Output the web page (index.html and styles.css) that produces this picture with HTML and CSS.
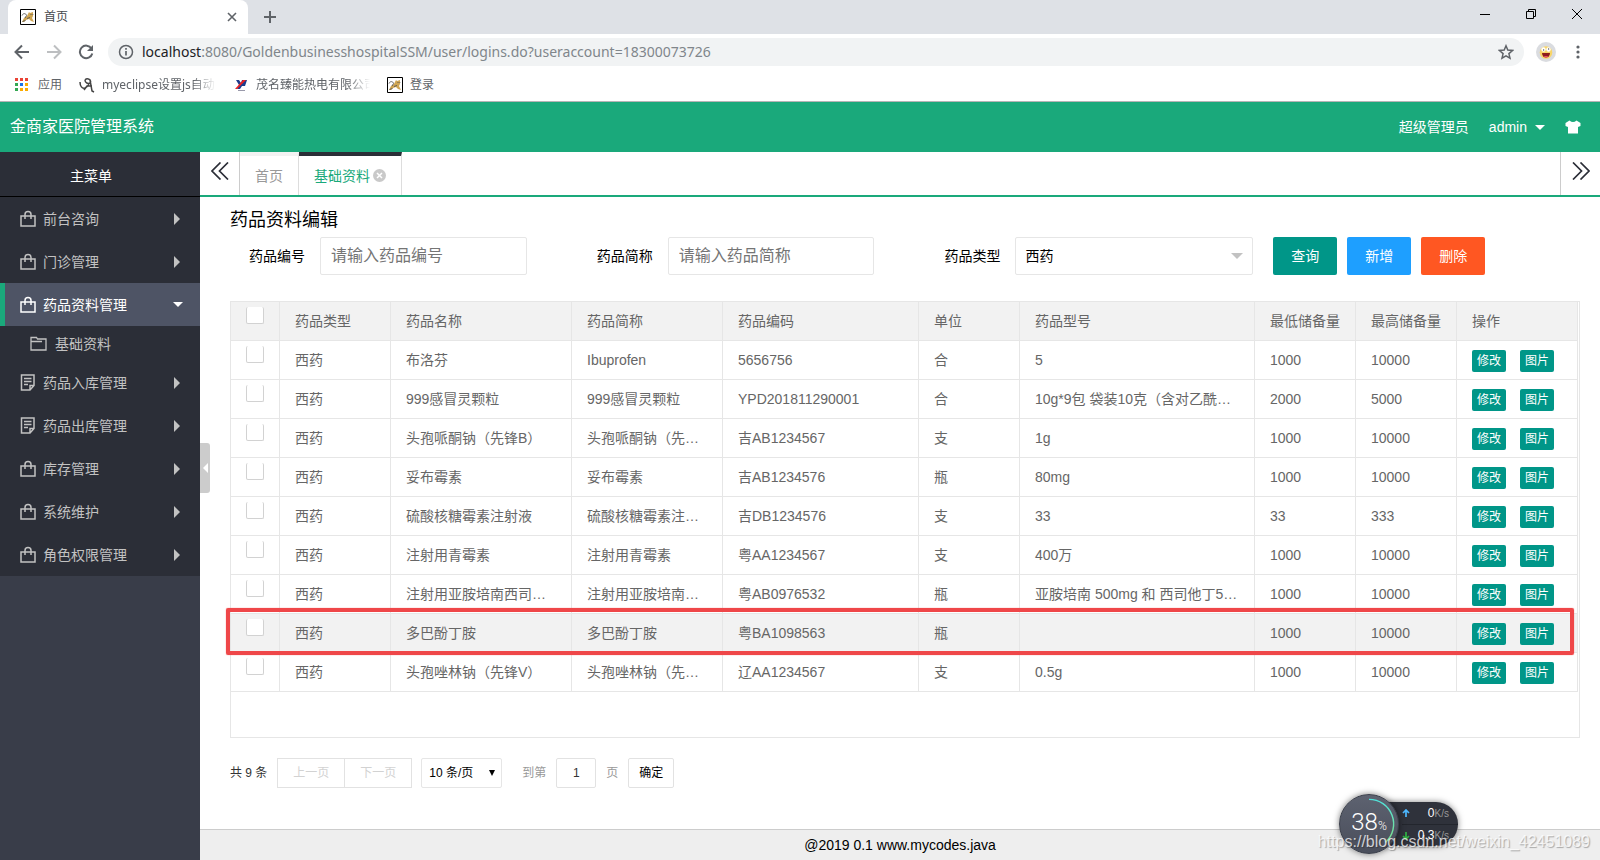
FILE: index.html
```html
<!DOCTYPE html>
<html lang="zh-CN">
<head>
<meta charset="utf-8">
<title>首页</title>
<link rel="stylesheet" href="styles.css">
</head>
<body>
<svg class="defs" width="0" height="0" aria-hidden="true">
  <symbol id="bag" viewBox="0 0 16 17"><path d="M1 6h14v10H1zM5 9V4.500a3 3 0 0 1 6 0V9" fill="none" stroke="currentColor" stroke-width="1.500"/></symbol>
  <symbol id="note" viewBox="0 0 16 17"><path d="M1.500 1h12.500v10.500L10 16H1.500zM14 11.500h-4V16M4 4.500h7.500M4 7.500h7.500M4 10.500h4" fill="none" stroke="currentColor" stroke-width="1.500"/></symbol>
  <symbol id="folder" viewBox="0 0 17 16"><path d="M1 14V1.500h5.500l1 1.500H16v11zM1 5.500h11" fill="none" stroke="currentColor" stroke-width="1.300"/></symbol>
  <symbol id="cat" viewBox="0 0 16 16"><path d="M.5.5h15v15H.5z" fill="#fff" stroke="#000"/><path d="M2 13l2-4 3-2 2-4 1 1 3-1v4l-1 2 2 4-3-1-2-2-3 1-2 2z" fill="#cfa552"/><path d="M2 6.500C3 4 6 4 6.500 6.500L5 9M7 9.500l3-1M10.500 5.500h1M12.500 5.500h.8M2.500 12.500l3-1" fill="none" stroke="#555" stroke-width=".9"/></symbol>
</svg>

<div class="browser">
  <div class="tabstrip">
    <div class="browser-tab">
      <svg class="i16"><use href="#cat"/></svg><span>首页</span>
      <button class="plain tab-x" aria-label="关闭标签页"><svg width="10" height="10" viewBox="0 0 10 10"><path d="M1 1l8 8M9 1L1 9" stroke="#5f6368" stroke-width="1.600"/></svg></button>
    </div>
    <button class="plain new-tab" aria-label="新标签页"><svg width="12" height="12" viewBox="0 0 12 12"><path d="M6 0v12M0 6h12" stroke="#5f6368" stroke-width="2"/></svg></button>
    <div class="win-buttons">
      <button class="plain" aria-label="最小化"><svg width="10" height="10"><path d="M0 5.500h10" stroke="#000"/></svg></button>
      <button class="plain" aria-label="还原"><svg width="10" height="10"><path d="M.5 2.500h7v7h-7zM2.500 2.500v-2h7v7h-2" fill="none" stroke="#000"/></svg></button>
      <button class="plain" aria-label="关闭"><svg width="10" height="10"><path d="M0 0l10 10M10 0L0 10" stroke="#000"/></svg></button>
    </div>
  </div>
  <div class="toolbar">
    <button class="plain" aria-label="后退"><svg width="16" height="16" viewBox="0 0 16 16"><path d="M15 8H2M8 1.500L1.500 8 8 14.500" fill="none" stroke="#5f6368" stroke-width="2"/></svg></button>
    <button class="plain" aria-label="前进"><svg width="16" height="16" viewBox="0 0 16 16"><path d="M1 8h13M8 1.500L14.500 8 8 14.500" fill="none" stroke="#bdbfc1" stroke-width="2"/></svg></button>
    <button class="plain" aria-label="刷新"><svg width="16" height="16" viewBox="0 0 16 16"><path d="M13.500 4.500A6.300 6.300 0 1 0 14.300 9.500" fill="none" stroke="#5f6368" stroke-width="2"/><path d="M15 1v6H9z" fill="#5f6368"/></svg></button>
    <div class="omnibox">
      <svg width="16" height="16" viewBox="0 0 16 16"><circle cx="8" cy="8" r="6.500" fill="none" stroke="#5f6368" stroke-width="1.500"/><path d="M8 7v4.500M8 4v1.700" stroke="#5f6368" stroke-width="1.700"/></svg>
      <span class="url"><b>localhost</b>:8080/GoldenbusinesshospitalSSM/user/logins.do?useraccount=18300073726</span>
      <svg width="16" height="16" viewBox="0 0 16 16"><path d="M8 1.800l1.800 4.300 4.700.4-3.600 3.100 1.100 4.600L8 11.800l-4 2.400 1.100-4.600L1.500 6.500l4.700-.4z" fill="none" stroke="#5f6368" stroke-width="1.500"/></svg>
    </div>
    <svg class="avatar" width="20" height="20" viewBox="0 0 20 20"><circle cx="10" cy="10" r="10" fill="#dadce0"/><circle cx="10" cy="10.500" r="6.300" fill="#f8d568"/><circle cx="7.500" cy="7.500" r="2.200" fill="#fff"/><circle cx="12.500" cy="7.500" r="2.200" fill="#fff"/><path d="M7 8h1.200M12 7h1.200" stroke="#333"/><path d="M6 11h8a4 4.500 0 0 1-8 0z" fill="#8d1d1d"/><path d="M7.800 14h4.400l-1 1.300H8.800z" fill="#f04a6a"/></svg>
    <button class="plain" aria-label="菜单"><svg width="4" height="14" viewBox="0 0 4 14"><g fill="#5f6368"><circle cx="2" cy="2" r="1.600"/><circle cx="2" cy="7" r="1.600"/><circle cx="2" cy="12" r="1.600"/></g></svg></button>
  </div>
  <nav class="bookmarks">
    <a href="#" class="apps"><svg width="14" height="14" viewBox="0 0 14 14"><path d="M0 0h3v3H0zM5 0h3v3H5zM10 0h3v3h-3z" fill="#ea4335"/><path d="M0 5h3v3H0zM0 10h3v3H0z" fill="#34a853"/><path d="M5 5h3v3H5z" fill="#1a73e8"/><path d="M10 5h3v3h-3zM5 10h3v3H5zM10 10h3v3h-3z" fill="#fbab00"/></svg><span>应用</span></a>
    <a href="#"><svg class="i16" viewBox="0 0 16 16"><path d="M1 5c0 4 2 7 5 6 2-1 3-2 4-4M6 3a3 2.500 0 1 1 5 3c-2 1-5 0-5-3M11 3l2 11 2 1M5 13l3-4h5" fill="none" stroke="#444" stroke-width="1.500"/></svg><span class="fade">myeclipse设置js自动</span></a>
    <a href="#"><svg class="i16" viewBox="0 0 16 16"><path d="M3 3h3l2 3 1-3h5l-2 6H9l-2 3H4l2-4z" fill="#1d3c8c"/><path d="M13 3L4 12H2l8-9z" fill="#e22"/><path d="M5 13.500h7" stroke="#99a"/></svg><span class="fade">茂名臻能热电有限公司</span></a>
    <a href="#"><svg class="i16"><use href="#cat"/></svg><span>登录</span></a>
  </nav>
</div>

<header class="topbar">
  <h1>金商家医院管理系统</h1>
  <div class="account">
    <span>超级管理员</span>
    <a href="#">admin<i class="tri down"></i></a>
    <button class="plain" aria-label="换肤"><svg width="16" height="14" viewBox="0 0 16 14"><path d="M4.500.5Q8 3.500 11.500.5L15.500 3v3L13 7v6.500H3V7L.5 6V3z" fill="#fff"/></svg></button>
  </div>
</header>

<div class="app">
  <aside class="sidebar">
    <h2>主菜单</h2>
    <nav>
      <a href="#"><svg><use href="#bag"/></svg>前台咨询<i class="tri"></i></a>
      <a href="#"><svg><use href="#bag"/></svg>门诊管理<i class="tri"></i></a>
      <a href="#" class="open"><svg><use href="#bag"/></svg>药品资料管理<i class="tri down"></i></a>
      <a href="#" class="sub"><svg><use href="#folder"/></svg>基础资料</a>
      <a href="#"><svg><use href="#note"/></svg>药品入库管理<i class="tri"></i></a>
      <a href="#"><svg><use href="#note"/></svg>药品出库管理<i class="tri"></i></a>
      <a href="#"><svg><use href="#bag"/></svg>库存管理<i class="tri"></i></a>
      <a href="#"><svg><use href="#bag"/></svg>系统维护<i class="tri"></i></a>
      <a href="#"><svg><use href="#bag"/></svg>角色权限管理<i class="tri"></i></a>
    </nav>
    <button class="plain fold" aria-label="收起菜单"><i class="tri left"></i></button>
  </aside>

  <div class="main">
    <div class="page-tabs">
      <button class="plain scroll" aria-label="向左"><svg width="18" height="18" viewBox="0 0 18 18"><path d="M9.500.5L1 9l8.500 8.500M17 .5L8.500 9l8.500 8.500" fill="none" stroke="#2b2e37" stroke-width="1.700"/></svg></button>
      <a href="#" class="tab home">首页</a>
      <a href="#" class="tab current">基础资料<svg width="13" height="13" viewBox="0 0 13 13"><circle cx="6.500" cy="6.500" r="6.500" fill="#c9c9c9"/><path d="M4 4l5 5M9 4L4 9" stroke="#fff" stroke-width="1.500"/></svg></a>
      <button class="plain scroll right" aria-label="向右"><svg width="18" height="18" viewBox="0 0 18 18"><path d="M1 .5L9.500 9 1 17.500M8.500.5L17 9l-8.500 8.500" fill="none" stroke="#2b2e37" stroke-width="1.700"/></svg></button>
    </div>

    <main>
      <h3>药品资料编辑</h3>
      <form class="search">
        <div class="field"><label for="code">药品编号</label><input id="code" type="text" placeholder="请输入药品编号"></div>
        <div class="field"><label for="abbr">药品简称</label><input id="abbr" type="text" placeholder="请输入药品简称"></div>
        <div class="field last"><label for="type">药品类型</label><span class="select"><select id="type"><option>西药</option></select><i class="tri down"></i></span></div>
        <div class="actions">
          <button type="button">查询</button>
          <button type="button" class="add">新增</button>
          <button type="button" class="del">删除</button>
        </div>
      </form>

      <div class="grid">
        <table>
          <colgroup><col class="c-check"><col class="c-type"><col class="c-name"><col class="c-abbr"><col class="c-code"><col class="c-num"><col><col class="c-num"><col class="c-num"><col class="c-ops"></colgroup>
          <thead><tr><th class="check"><input type="checkbox" aria-label="全选"></th><th>药品类型</th><th>药品名称</th><th>药品简称</th><th>药品编码</th><th>单位</th><th>药品型号</th><th>最低储备量</th><th>最高储备量</th><th>操作</th></tr></thead>
          <tbody>
            <tr><td class="check"><input type="checkbox" aria-label="选择"></td><td>西药</td><td>布洛芬</td><td>Ibuprofen</td><td>5656756</td><td>合</td><td>5</td><td>1000</td><td>10000</td><td class="ops"><button>修改</button><button>图片</button></td></tr>
            <tr><td class="check"><input type="checkbox" aria-label="选择"></td><td>西药</td><td>999感冒灵颗粒</td><td>999感冒灵颗粒</td><td>YPD201811290001</td><td>合</td><td>10g*9包 袋装10克（含对乙酰氨基酚）</td><td>2000</td><td>5000</td><td class="ops"><button>修改</button><button>图片</button></td></tr>
            <tr><td class="check"><input type="checkbox" aria-label="选择"></td><td>西药</td><td>头孢哌酮钠（先锋B）</td><td>头孢哌酮钠（先锋B）</td><td>吉AB1234567</td><td>支</td><td>1g</td><td>1000</td><td>10000</td><td class="ops"><button>修改</button><button>图片</button></td></tr>
            <tr><td class="check"><input type="checkbox" aria-label="选择"></td><td>西药</td><td>妥布霉素</td><td>妥布霉素</td><td>吉AB1234576</td><td>瓶</td><td>80mg</td><td>1000</td><td>10000</td><td class="ops"><button>修改</button><button>图片</button></td></tr>
            <tr><td class="check"><input type="checkbox" aria-label="选择"></td><td>西药</td><td>硫酸核糖霉素注射液</td><td>硫酸核糖霉素注射液</td><td>吉DB1234576</td><td>支</td><td>33</td><td>33</td><td>333</td><td class="ops"><button>修改</button><button>图片</button></td></tr>
            <tr><td class="check"><input type="checkbox" aria-label="选择"></td><td>西药</td><td>注射用青霉素</td><td>注射用青霉素</td><td>粤AA1234567</td><td>支</td><td>400万</td><td>1000</td><td>10000</td><td class="ops"><button>修改</button><button>图片</button></td></tr>
            <tr><td class="check"><input type="checkbox" aria-label="选择"></td><td>西药</td><td>注射用亚胺培南西司他丁</td><td>注射用亚胺培南西司他丁</td><td>粤AB0976532</td><td>瓶</td><td>亚胺培南 500mg 和 西司他丁500mg</td><td>1000</td><td>10000</td><td class="ops"><button>修改</button><button>图片</button></td></tr>
            <tr class="marked"><td class="check"><input type="checkbox" aria-label="选择"><i class="frame"></i></td><td>西药</td><td>多巴酚丁胺</td><td>多巴酚丁胺</td><td>粤BA1098563</td><td>瓶</td><td></td><td>1000</td><td>10000</td><td class="ops"><button>修改</button><button>图片</button></td></tr>
            <tr><td class="check"><input type="checkbox" aria-label="选择"></td><td>西药</td><td>头孢唑林钠（先锋V）</td><td>头孢唑林钠（先锋V）</td><td>辽AA1234567</td><td>支</td><td>0.5g</td><td>1000</td><td>10000</td><td class="ops"><button>修改</button><button>图片</button></td></tr>
          </tbody>
        </table>
      </div>

      <div class="pager">
        <span class="total">共 9 条</span>
        <div class="steps"><button disabled>上一页</button><button disabled>下一页</button></div>
        <span class="select size"><select aria-label="每页条数"><option>10 条/页</option></select><i class="tri down"></i></span>
        <label for="page">到第</label><input id="page" type="text" value="1"><span class="unit">页</span>
        <button class="go">确定</button>
      </div>
    </main>
    <footer>@2019 0.1 www.mycodes.java</footer>
  </div>
</div>

<div class="monitor">
  <div class="speeds">
    <p><svg width="8" height="8" viewBox="0 0 8 8"><path d="M4 8V1M1 4l3-3 3 3" fill="none" stroke="#4db8ff" stroke-width="1.700"/></svg><span>0<small>K/s</small></span></p>
    <p><svg width="8" height="8" viewBox="0 0 8 8"><path d="M4 0v7M1 4l3 3 3-3" fill="none" stroke="#2fb344" stroke-width="1.700"/></svg><span>0.3<small>K/s</small></span></p>
  </div>
  <div class="dial">
    <svg viewBox="0 0 60 60"><defs><linearGradient id="arc" x1="0" y1="0" x2="0" y2="1"><stop offset="0" stop-color="#4fe3dc"/><stop offset="1" stop-color="#7fe08a"/></linearGradient></defs><path d="M30 4.500A25.500 25.500 0 0 1 47 49" fill="none" stroke="url(#arc)" stroke-width="1.500"/></svg>
    <span>38<small>%</small></span>
  </div>
</div>
<div class="watermark">https://blog.csdn.net/weixin_42451089</div>
</body>
</html>
```
FILE: styles.css
```css
* { box-sizing: border-box; }
html, body { height: 100%; }
body {
  margin: 0;
  display: flex;
  flex-direction: column;
  overflow: hidden;
  background: #fff;
  color: #000;
  font: 14px/20px "Liberation Sans", "Noto Sans CJK SC", sans-serif;
}
h1, h2, h3, p { margin: 0; font-weight: 400; }
a { color: inherit; text-decoration: none; }
button, input, select { font: inherit; color: inherit; margin: 0; }
svg { flex: none; display: block; }
.defs { position: absolute; }
.plain { border: 0; padding: 0; background: none; display: flex; align-items: center; justify-content: center; }
.i16 { width: 16px; height: 16px; }

.tri { flex: none; width: 0; height: 0; border: 6px solid transparent; border-left-color: currentColor; border-right-width: 0; }
.tri.down { border: 6px solid transparent; border-top-color: currentColor; border-bottom-width: 0; }
.tri.left { border: 5px solid transparent; border-right-color: #fff; border-left-width: 0; }

/* browser frame */
.browser { flex: none; border-bottom: 1px solid #b6b4b6; font-family: "Noto Sans", "Noto Sans CJK SC", sans-serif; }
.tabstrip { display: flex; align-items: center; height: 34px; background: #dee1e6; padding-left: 8px; }
.browser-tab { display: flex; align-items: center; gap: 8px; align-self: stretch; width: 240px; padding: 0 11px 0 12px; background: #fff; border-radius: 8px 8px 0 0; font-size: 12px; color: #45494d; }
.tab-x { margin-left: auto; }
.new-tab { margin-left: 16px; }
.win-buttons { display: flex; align-items: center; gap: 36px; margin-left: auto; padding: 0 18px 6px 0; }
.toolbar { display: flex; align-items: center; gap: 16px; height: 36px; padding: 0 20px 0 14px; }
.omnibox { flex: 1; display: flex; align-items: center; gap: 8px; height: 28px; padding: 0 10px; border-radius: 14px; background: #f1f3f4; margin-left: -2px; }
.url { flex: 1; font-size: 14px; color: #80868b; }
.url b { font-weight: 400; color: #202124; }
.avatar { margin: 0 4px 0 -4px; }
.bookmarks { display: flex; align-items: center; gap: 17px; height: 31px; padding: 0 14px 2px 15px; font-size: 12px; color: #5f6368; }
.bookmarks a { display: flex; align-items: center; gap: 7px; }
.bookmarks .apps { gap: 9px; }
.fade { width: 114px; overflow: hidden; white-space: nowrap; -webkit-mask-image: linear-gradient(to right, #000 80%, transparent); mask-image: linear-gradient(to right, #000 80%, transparent); }

/* application header */
.topbar { flex: none; display: flex; align-items: center; justify-content: space-between; height: 50px; padding: 0 19px 0 10px; background: #1aa97b; color: #fff; }
.topbar h1 { font-size: 16px; }
.account { display: flex; align-items: center; gap: 20px; }
.account a { display: flex; align-items: center; gap: 8px; }
.account .tri { border-width: 5px 5px 0; }

.app { flex: 1; min-height: 0; display: flex; }

/* side menu */
.sidebar { position: relative; flex: none; width: 200px; background: #393d49; color: #c2c2c2; }
.sidebar h2 { height: 45px; padding-right: 18px; border-bottom: 1px solid #000; background: #2b2e37; color: #fff; font-size: 14px; line-height: 48px; text-align: center; }
.sidebar nav { background: #2b2e37; }
.sidebar nav a { display: flex; align-items: center; height: 43px; padding: 0 20px; gap: 7px; }
.sidebar nav svg { width: 16px; height: 17px; }
.sidebar nav .tri { margin-left: auto; }
.sidebar nav .open { background: #4e5465; color: #fff; border-left: 5px solid #1aa97b; padding: 0 17px 0 15px; }
.sidebar nav .open .tri { border-width: 5px 5px 0; }
.sidebar nav .sub { height: 35px; padding-left: 30px; gap: 8px; }
.sidebar nav .sub svg { width: 17px; height: 16px; }
.fold { position: absolute; left: 100%; top: 291px; z-index: 1; width: 10px; height: 50px; background: #ccc; border-radius: 0 3px 3px 0; }

/* main column */
.main { flex: 1; min-width: 0; display: flex; flex-direction: column; }
.page-tabs { flex: none; display: flex; height: 45px; border-bottom: 2px solid #1aa97b; }
.scroll { width: 40px; padding-bottom: 5px; border-right: 1px solid #ccc; }
.scroll.right { margin-left: auto; border-right: 0; border-left: 1px solid #ccc; }
.tab { display: flex; align-items: center; gap: 3px; padding: 0 15px; border-top: 4px solid #f2f2f2; border-right: 1px solid #ddd; color: #999; }
.tab.current { border-top-color: #2b2e37; color: #1aa97b; }

main { flex: 1; padding: 11px 20px 0 30px; }
h3 { font-size: 18px; line-height: 24px; }
.search { display: grid; grid-template-columns: 348fr 348fr 309fr 327fr; padding: 5px 0 0 19px; font-size: 14px; }
.field { display: flex; align-items: center; gap: 15px; padding-right: 70px; }
.field.last { padding-right: 0; }
.field label { flex: none; }
.field input { flex: 1; min-width: 0; height: 38px; padding: 0 10px; border: 1px solid #e6e6e6; border-radius: 2px; font-size: 16px; }
input::placeholder { color: #757575; opacity: 1; }
.select { position: relative; flex: 1; display: flex; align-items: center; }
.select select { flex: 1; min-width: 0; height: 38px; padding: 0 9px; appearance: none; border: 1px solid #e6e6e6; border-radius: 2px; background: #fff; }
.select .tri { position: absolute; right: 10px; color: #c2c2c2; pointer-events: none; }
.actions { display: flex; gap: 10px; padding-left: 20px; }
.actions button { width: 64px; height: 38px; padding: 0; border: 0; border-radius: 2px; background: #009688; color: #fff; }
.actions .add { background: #1e9fff; }
.actions .del { background: #ff5722; }

/* data table */
.grid { margin-top: 26px; padding: 0 1px 45px 0; border: 1px solid #e6e6e6; color: #666; }
table { width: 100%; table-layout: fixed; border-collapse: separate; border-spacing: 0; }
.c-check { width: 49px; }
.c-type { width: 111px; }
.c-name { width: 181px; }
.c-abbr { width: 151px; }
.c-code { width: 196px; }
.c-num { width: 101px; }
.c-ops { width: 121px; }
th, td { height: 39px; padding: 0 15px; border: solid #e6e6e6; border-width: 0 1px 1px 0; font-weight: 400; text-align: left; white-space: nowrap; overflow: hidden; text-overflow: ellipsis; }
th, .marked td { background: #f2f2f2; }
.check { padding: 5px 15px 0; vertical-align: top; }
.check input { display: block; appearance: none; width: 18px; height: 17px; border: 1px solid #d2d2d2; border-top: 0; border-radius: 2px; background: #fff; }
.ops { padding-top: 2px; }
.ops button { height: 22px; padding: 0 5px; border: 0; border-radius: 2px; background: #009688; color: #fff; font-size: 12px; line-height: 22px; vertical-align: middle; }
.ops button + button { margin-left: 14px; }
.marked { position: relative; }
.frame { position: absolute; inset: -6px 4px -2px -5px; border: 4px solid #ef4749; border-radius: 2px; box-shadow: 0 0 1px #ef4749; pointer-events: none; }

/* pagination */
.pager { display: flex; align-items: center; padding-top: 20px; font-size: 12px; color: #333; }
.pager button, .pager input { height: 30px; padding: 0; border: 1px solid #e2e2e2; background: #fff; text-align: center; }
.steps { display: flex; margin: 0 9px 0 10px; }
.steps button { width: 68px; color: #d2d2d2; }
.steps button + button { margin-left: -1px; }
.size { flex: none; width: 81px; margin-right: 20px; color: #000; }
.size select { height: 30px; padding: 0 7px; }
.size .tri { right: 7px; color: #000; border-width: 6px 3px 0; }
.pager label, .unit { color: #999; }
.pager input { width: 40px; margin: 0 10px; border-radius: 2px; }
.pager .go { width: 46px; margin-left: 10px; border-radius: 2px; color: #000; }

footer { flex: none; height: 31px; border-top: 1px solid #ccc; background: #eee; line-height: 31px; text-align: center; }

/* floating network monitor */
.monitor { position: absolute; right: 142px; bottom: 6px; z-index: 2; display: flex; flex-direction: row-reverse; align-items: center; color: #fff; }
.dial { position: relative; display: flex; align-items: center; justify-content: center; width: 60px; height: 60px; border: 1px solid #3b3f4a; border-radius: 50%; background: linear-gradient(#5d6270, #4a4e5b); box-shadow: 0 0 6px rgba(0, 0, 0, .5); font: 300 24px/28px Roboto, "Open Sans", sans-serif; }
.dial svg { position: absolute; inset: 0; }
.dial small { font-size: 12px; }
.speeds { width: 76px; margin-left: -17px; padding-left: 20px; border-radius: 0 22px 22px 0; background: #2f323b; box-shadow: 0 0 6px rgba(0, 0, 0, .5); font-size: 12px; }
.speeds p { display: flex; align-items: center; justify-content: space-between; height: 22px; padding-right: 9px; }
.speeds p + p { border-top: 1px solid #23262d; }
.speeds small { font-size: 10px; color: #999; }
.dial { z-index: 1; }

.watermark { position: absolute; right: 10px; bottom: 8px; z-index: 3; color: rgba(255, 255, 255, .75); font-size: 16px; text-shadow: 1px 1px 1px rgba(0, 0, 0, .3); pointer-events: none; }
```
